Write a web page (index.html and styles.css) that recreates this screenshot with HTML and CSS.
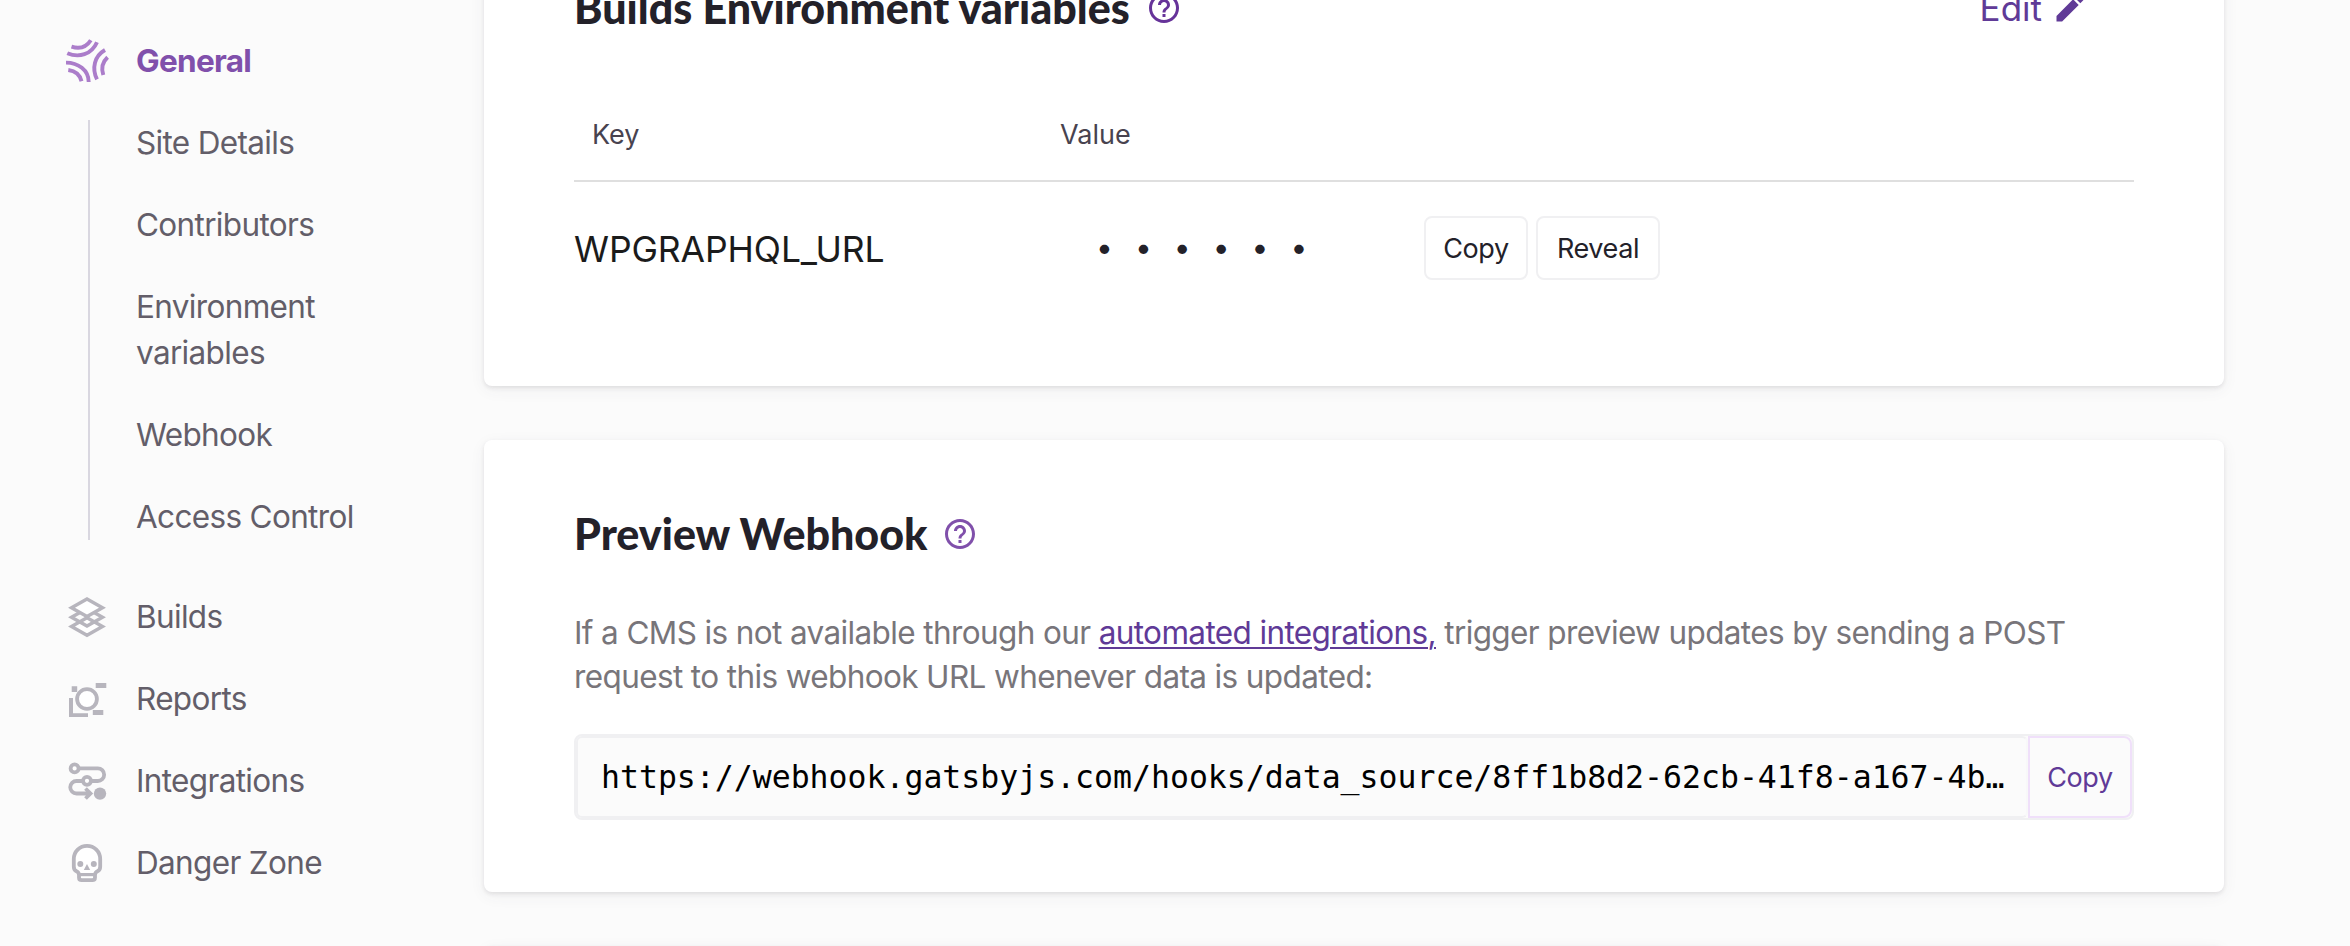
FILE: index.html
```html
<!DOCTYPE html>
<html lang="en">
<head>
<meta charset="utf-8">
<title>Site settings</title>
<link rel="stylesheet" href="styles.css">
</head>
<body>
<div class="page">
  <nav class="sidebar">
    <a class="nav-item active">
      <svg class="nav-icon" viewBox="-1 -1 44 44" fill="none" stroke="#ab7dca" stroke-width="3.900">
        <path d="M5.500 6.700C13.500 9.200 20.500 7 24.800.3M1.300 13.200C13 18.200 25.500 14.500 31 2.200M39 10C28.500 16 25.500 28 31 39.300M41.600 17.300C36 22.500 35 28 37.300 35M0 22.600C12 22.600 22.700 30 22.700 42M2.300 30C9.500 31 14 35 15.500 41.200"/>
      </svg>
      <span>General</span>
    </a>
    <div class="subnav">
      <a>Site Details</a>
      <a>Contributors</a>
      <a>Environment<br>variables</a>
      <a>Webhook</a>
      <a>Access Control</a>
    </div>
    <a class="nav-item">
      <svg class="nav-icon" viewBox="-3 -1 44 44" fill="none" stroke="#b7b5bd" stroke-width="3.400">
        <path fill="#fff" d="M19 21.800 34.500 30.500 19 39.300 3.500 30.500Z"/>
        <path d="M19 12.500 34.500 21.300 19 30 3.500 21.300Z"/>
        <path fill="#fff" d="M19 3 34.500 11.700 19 20.500 3.500 11.700Z"/>
      </svg>
      <span>Builds</span>
    </a>
    <a class="nav-item">
      <svg class="nav-icon" viewBox="-3 -3 44 44" fill="#b7b5bd">
        <circle cx="19" cy="19" r="9.900" fill="#fff" stroke="#b7b5bd" stroke-width="3.800"/>
        <path d="M3.700 6.300h5.500V12H3.700zM27.700 3h10.600v5H27.700zM24.800 30h10.500v5H24.800zM1 18h4v15.300h15V37H1z"/>
      </svg>
      <span>Reports</span>
    </a>
    <a class="nav-item">
      <svg class="nav-icon" viewBox="-3 -3 44 44" fill="none" stroke="#b7b5bd" stroke-width="3.800">
        <path d="M11 6.300H29.800a6.350 6.350 0 0 1 0 12.700H8.500a6.250 6.250 0 0 0 0 12.500H22M17.500 26.500 22.500 31.500 17.500 36.500"/>
        <circle cx="6.600" cy="6.400" r="4" fill="#fff"/>
        <circle cx="19" cy="18.800" r="4" fill="#fff"/>
        <circle cx="32" cy="31.600" r="6.200" fill="#b7b5bd" stroke="none"/>
      </svg>
      <span>Integrations</span>
    </a>
    <a class="nav-item">
      <svg class="nav-icon" viewBox="-3 -1 44 44" fill="none" stroke="#b7b5bd" stroke-width="3.800">
        <path fill="#fff" d="M5.800 17a13.200 13.200 0 0 1 26.400 0V24.500Q32.200 28 29.500 29.300 27 30.500 27 33V35.500Q27 38.200 24.300 38.200H13.700Q11 38.200 11 35.500V33Q11 30.500 8.500 29.300 5.800 28 5.800 24.500Z"/>
        <path d="M11.500 32.600H26.500" stroke-width="3.200"/>
        <g fill="#b7b5bd" stroke="none"><circle cx="12.300" cy="22" r="3"/><circle cx="25.800" cy="22" r="3"/><path d="M19 22 22.200 28H15.800Z"/></g>
      </svg>
      <span>Danger Zone</span>
    </a>
  </nav>

  <main class="content">
    <section class="card">
      <header class="card-head">
        <h2 class="title-env">Builds Environment variables</h2>
        <svg class="help help-dark" viewBox="0 0 24 24"><path d="M11 18h2v-2h-2v2zm1-16C6.480 2 2 6.480 2 12s4.480 10 10 10 10-4.480 10-10S17.520 2 12 2zm0 18c-4.410 0-8-3.590-8-8s3.590-8 8-8 8 3.590 8 8-3.590 8-8 8zm0-14c-2.210 0-4 1.790-4 4h2c0-1.100.9-2 2-2s2 .9 2 2c0 2-3 1.750-3 5h2c0-2.250 3-2.500 3-5 0-2.210-1.790-4-4-4z"/></svg>
        <a class="edit"><span>Edit</span>
          <svg viewBox="0 0 24 24"><path d="M3 17.250V21h3.750L17.810 9.940l-3.750-3.750L3 17.250zM20.710 7.040c.39-.39.39-1.020 0-1.410l-2.340-2.340c-.39-.39-1.020-.39-1.410 0l-1.830 1.830 3.750 3.750 1.830-1.830z"/></svg>
        </a>
      </header>
      <div class="vars-head"><span class="key">Key</span><span class="value">Value</span></div>
      <div class="vars-row">
        <span class="var-name">WPGRAPHQL_URL</span>
        <span class="dots"><i>•</i><i>•</i><i>•</i><i>•</i><i>•</i><i>•</i></span>
        <button class="btn btn-copy">Copy</button>
        <button class="btn btn-reveal">Reveal</button>
      </div>
    </section>

    <section class="card">
      <header class="card-head">
        <h2 class="title-hook">Preview Webhook</h2>
        <svg class="help" viewBox="0 0 24 24"><path d="M11 18h2v-2h-2v2zm1-16C6.480 2 2 6.480 2 12s4.480 10 10 10 10-4.480 10-10S17.520 2 12 2zm0 18c-4.410 0-8-3.590-8-8s3.590-8 8-8 8 3.590 8 8-3.590 8-8 8zm0-14c-2.210 0-4 1.790-4 4h2c0-1.100.9-2 2-2s2 .9 2 2c0 2-3 1.750-3 5h2c0-2.250 3-2.500 3-5 0-2.210-1.790-4-4-4z"/></svg>
      </header>
      <p class="lead">If a CMS is not available through our <a>automated integrations,</a> trigger preview updates by sending a POST<br>request to this webhook URL whenever data is updated:</p>
      <div class="hook">
        <div class="hook-url">https://webhook.gatsbyjs.com/hooks/data_source/8ff1b8d2-62cb-41f8-a167-4b…</div>
        <button class="hook-copy">Copy</button>
      </div>
    </section>

    <section class="card card-next"></section>
  </main>
</div>
</body>
</html>
```
FILE: styles.css
```css
* {
  box-sizing: border-box;
}

body {
  margin: 0;
  background: #fbfbfb;
  font-family: Inter, "Liberation Sans", sans-serif;
  color: #232129;
}

.page {
  display: flex;
  width: 2350px;
  height: 946px;
  overflow: hidden;
}

/* Sidebar */

.sidebar {
  width: 484px;
  flex: none;
  padding-top: 38px;
  display: flex;
  flex-direction: column;
  font-size: 31.5px;
  font-weight: 430;
  line-height: 46px;
  letter-spacing: -0.66px;
  color: #635e69;
}

.nav-item {
  display: flex;
  align-items: center;
  height: 46px;
  margin-bottom: 36px;
  padding-left: 65px;
  gap: 27px;
}

.nav-item.active {
  font-weight: 700;
  color: #8050ab;
  letter-spacing: -0.7px;
}

.nav-icon {
  width: 44px;
  height: 44px;
  flex: none;
}

.subnav {
  display: flex;
  flex-direction: column;
  gap: 36px;
  height: 420px;
  margin: 0 0 54px 88px;
  padding-left: 46px;
  border-left: 2px solid #d9d7e0;
}

/* Cards */

.content {
  width: 1740px;
  margin-top: -86px;
  display: flex;
  flex-direction: column;
  gap: 54px;
}

.card {
  flex: none;
  padding: 72px 90px;
  background: #fff;
  border-radius: 8px;
  box-shadow: 0 2px 4px rgba(46, 41, 51, 0.1), 0 4px 16px rgba(71, 63, 79, 0.06);
}

.card-next {
  height: 100px;
}

.card-head {
  display: flex;
  align-items: center;
  height: 44px;
}

.card-head h2 {
  margin: 0;
  padding-bottom: 1px;
  font: 900 43px/43px Lato, "Open Sans", sans-serif;
  white-space: nowrap;
}

.title-env {
  width: 572px;
}

.title-hook {
  width: 368px;
}

.help {
  width: 36px;
  height: 36px;
  flex: none;
  fill: #8050ab;
}

.help-dark {
  fill: #663399;
}

.edit {
  display: flex;
  align-items: center;
  gap: 10px;
  margin-left: auto;
  padding-right: 46px;
  font-size: 35px;
  line-height: 42px;
  color: #603a97;
}

.edit span {
  padding-bottom: 1px;
}

.edit svg {
  width: 36px;
  height: 36px;
  fill: #603a97;
}

.vars-head {
  display: flex;
  height: 152px;
  padding: 59px 0 0 18px;
  border-bottom: 2px solid #dfdfdf;
  font-size: 27px;
  line-height: 92px;
  color: #48434f;
}

.key {
  width: 468px;
}

.vars-row {
  display: flex;
  align-items: center;
  height: 132px;
}

.var-name {
  width: 511px;
  padding-top: 2px;
  font-size: 35.5px;
  letter-spacing: -0.1px;
  color: #1b1b1b;
}

.dots {
  display: flex;
  width: 339px;
  padding-bottom: 2px;
}

.dots i {
  width: 38.9px;
  font-size: 30px;
  font-style: normal;
  text-align: center;
}

.btn,
.hook-copy {
  height: 64px;
  padding: 0;
  font: 27px Inter, "Liberation Sans", sans-serif;
  letter-spacing: -0.4px;
  color: #232129;
  background: #fff;
  border: 2px solid #f0f0f2;
  border-radius: 8px;
}

.btn-copy {
  width: 104px;
}

.btn-reveal {
  width: 124px;
  margin-left: 8px;
}

.lead {
  margin: 55px 0 35px;
  font-size: 31.5px;
  font-weight: 430;
  line-height: 44px;
  letter-spacing: -0.62px;
  white-space: nowrap;
  color: #78757a;
}

.lead a {
  color: #603a97;
  text-decoration: underline;
  text-decoration-thickness: 2px;
  text-underline-offset: 3px;
}

.hook {
  display: flex;
  height: 86px;
  border: 2px solid #f0f0f2;
  border-radius: 8px;
  background: #fbfbfb;
}

.hook-url {
  flex: 1;
  padding-left: 23px;
  border: 2px solid #f0f0f2;
  border-right-color: #f8f8f9;
  border-radius: 6px;
  font: 31.5px/78px "DejaVu Sans Mono", monospace;
  white-space: nowrap;
  overflow: hidden;
  color: #000;
}

.hook-copy {
  width: 104px;
  height: 82px;
  color: #603a97;
  background: #fbfbfb;
  border-color: #f0e0fa;
  border-radius: 0 8px 8px 0;
}
```
